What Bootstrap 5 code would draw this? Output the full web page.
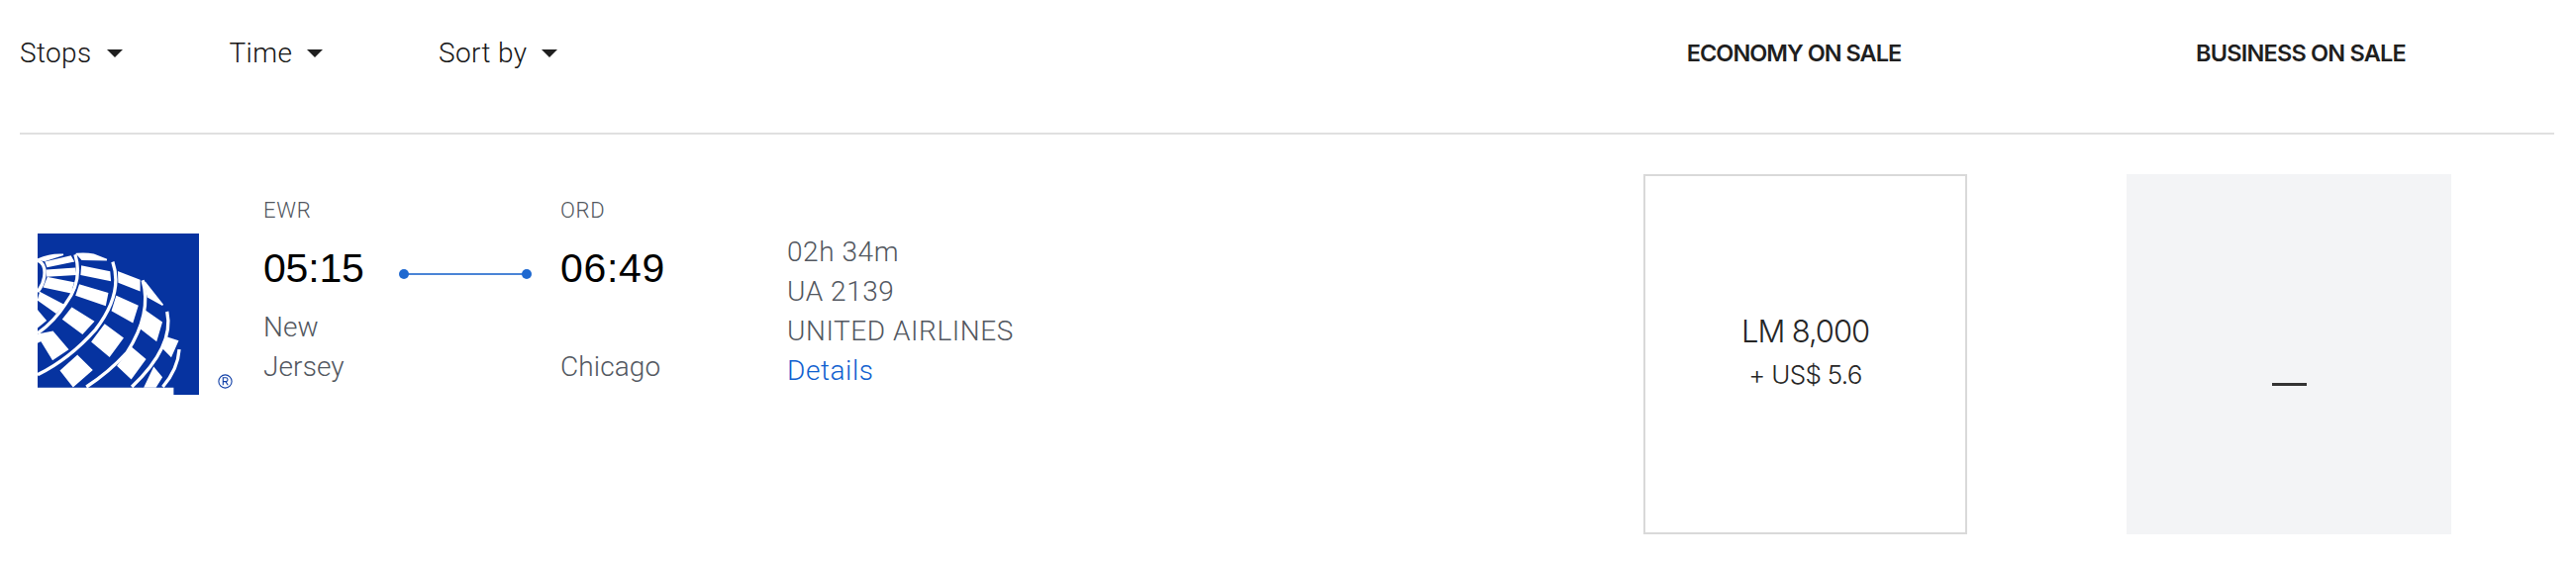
<!DOCTYPE html>
<html lang="en">
<head>
<meta charset="utf-8">
<title>Flights</title>
<link href="https://cdn.jsdelivr.net/npm/bootstrap@5.3.0/dist/css/bootstrap.min.css" rel="stylesheet">
<style>
body{background:#fff;font-family:"Roboto","Liberation Sans",sans-serif;font-weight:300;color:#262626;overflow:hidden}
.page-wrap{margin:0 22px 0 20px}
.filter-bar{height:136px;border-bottom:2px solid #e0e0e0;padding-bottom:26px}
.filter-group{width:1620px}
.filter-btn{width:211.5px;font-size:28px;line-height:40px;color:#161616;letter-spacing:.35px}
.filter-btn.dropdown-toggle::after{margin-left:15px;vertical-align:.17em;border-top-width:8px;border-left-width:8px;border-right-width:8px;color:#1f1f1f}
.head-cell{font-family:"Inter","Liberation Sans",sans-serif;font-weight:600;font-size:23.5px;letter-spacing:-1px;color:#1f1f1f;text-align:center}
.head-econ{width:344px}
.head-bus{width:352px;margin-left:164px;letter-spacing:-.8px}
.flight-row{padding-top:40px}
.logo-col{width:246px;padding:60px 0 0 18px}
.logo-mark{width:163px;height:163px;display:block}
.reg-mark{width:15px;height:15px;display:block;margin:-21px 0 0 182px}
.city-col{width:300px}
.city-col-last{width:229px}
.code-txt{font-size:22px;line-height:32px;color:#525760;padding-top:21px;letter-spacing:.7px}
.time-row{margin-top:18px;height:48px}
.time-txt{font-family:"Liberation Sans",sans-serif;font-weight:400;font-size:41px;line-height:48px;color:#000;letter-spacing:-.2px}
.time-arrive{letter-spacing:.7px}
.conn-line{width:132px;height:2px;background:#4a84d6;margin:12px 0 0 36px;position:relative}
.conn-line::before,.conn-line::after{content:"";position:absolute;top:-4px;width:10px;height:10px;border-radius:50%;background:#1f69d0}
.conn-line::before{left:-1px}
.conn-line::after{right:-1px}
.city-txt{font-size:28px;line-height:40px;color:#525760;height:80px;margin-top:16px;width:96px;letter-spacing:.1px}
.meta-col{width:865px;padding-top:59px;font-size:28px;line-height:40px;color:#525760;letter-spacing:.55px}
.meta-col a{color:#0f5fcf;text-decoration:none}
.fare-box{width:327px;height:364px;flex:none}
.fare-econ{border:2px solid #d9d9d9}
.fare-bus{background:#f3f4f6;margin-left:161px;width:328px}
.fare-main{font-family:"Inter","Liberation Sans",sans-serif;font-weight:300;font-size:31px;line-height:44px;letter-spacing:-1.1px;color:#262626;margin-top:-3px}
.fare-sub{font-family:"Inter","Liberation Sans",sans-serif;font-weight:300;font-size:26px;line-height:44px;letter-spacing:-.7px;color:#262626}
.dash-txt{width:35px;height:3px;background:#333;margin-top:60px}
</style>
</head>
<body>
<div class="page-wrap">
  <div class="filter-bar d-flex align-items-center">
    <div class="filter-group d-flex">
      <div class="filter-btn dropdown-toggle">Stops</div>
      <div class="filter-btn dropdown-toggle">Time</div>
      <div class="filter-btn dropdown-toggle">Sort by</div>
    </div>
    <div class="head-cell head-econ">ECONOMY ON SALE</div>
    <div class="head-cell head-bus">BUSINESS ON SALE</div>
  </div>
  <div class="flight-row d-flex">
    <div class="logo-col flex-shrink-0">
      <svg class="logo-mark" viewBox="114 108 490 490" xmlns="http://www.w3.org/2000/svg" aria-label="United Airlines logo">
        <path fill="#0633a0" d="M114 108H604V598H527V576H114Z"/>
        <g fill="none" stroke="#fff" stroke-width="10">
          <path d="M114 190Q140 200 134 240Q130 265 114 285"/>
          <path d="M228 172Q252 250 200 320Q165 375 114 411"/>
          <path d="M342 194Q375 290 290 400Q210 490 114 537"/>
          <path d="M433 250Q462 350 385 470Q330 530 262 574"/>
          <path d="M507 345Q530 450 400 574"/>
          <path d="M544 460Q540 520 494 574"/>
        </g>
        <g fill="#fff" stroke="#fff" stroke-width="5" stroke-linejoin="miter">
          <path d="M116 186Q150 170 192 172L135 190Z"/>
          <path d="M139 195L214 178L222 192L144 208Z"/>
          <path d="M142 220L227 214L229 232L144 237Z"/>
          <path d="M145 243L222 258L214 287L134 270Z"/>
          <path d="M122 288L192 325L170 348L116 310Z"/>
          <path d="M116 346L138 372L116 390Z"/>
          <path d="M234 170Q262 168 284 172L324 188L249 187Z"/>
          <path d="M249 208L332 225L334 250L247 232Z"/>
          <path d="M242 265L326 290L319 325L232 295Z"/>
          <path d="M218 335L283 375L250 411L192 368Z"/>
          <path d="M160 407L205 460L160 490L125 433L116 437V415Z"/>
          <path d="M360 226L423 250V280L361 256Z"/>
          <path d="M354 300L417 328L402 376L341 342Z"/>
          <path d="M318 386L372 426L332 480L280 437Z"/>
          <path d="M235 480L278 523L222 572L185 525Z"/>
          <path d="M439 255L494 325L449 300Z"/>
          <path d="M443 345L490 378L474 432L427 396Z"/>
          <path d="M400 456L440 490L398 548L358 510Z"/>
          <path d="M509 425L539 435L519 480L494 455Z"/>
          <path d="M467 517L490 545L472 574H440Z"/>
        </g>
      </svg>
      <svg class="reg-mark" viewBox="0 0 15 15" xmlns="http://www.w3.org/2000/svg" aria-hidden="true">
        <circle cx="7.5" cy="7.5" r="6.6" fill="none" stroke="#0f3ea6" stroke-width="1.1"/>
        <path fill="none" stroke="#0f3ea6" stroke-width="1.1" d="M5.3 11.3V3.8H8.2Q10 3.8 10 5.7T8.2 7.6H5.3M8 7.6L10.2 11.3"/>
      </svg>
    </div>
    <div class="city-col flex-shrink-0">
      <div class="code-txt">EWR</div>
      <div class="time-row d-flex align-items-center">
        <div class="time-txt">05:15</div>
        <div class="conn-line"></div>
      </div>
      <div class="city-txt">New Jersey</div>
    </div>
    <div class="city-col-last flex-shrink-0">
      <div class="code-txt">ORD</div>
      <div class="time-row d-flex align-items-center">
        <div class="time-txt time-arrive">06:49</div>
      </div>
      <div class="city-txt d-flex align-items-end">Chicago</div>
    </div>
    <div class="meta-col flex-shrink-0">
      <div>02h 34m</div>
      <div>UA 2139</div>
      <div>UNITED AIRLINES</div>
      <a href="#">Details</a>
    </div>
    <div class="fare-box fare-econ d-flex flex-column align-items-center justify-content-center">
      <div class="fare-main">LM 8,000</div>
      <div class="fare-sub">+ US$ 5.6</div>
    </div>
    <div class="fare-box fare-bus d-flex align-items-center justify-content-center">
      <div class="dash-txt"></div>
    </div>
  </div>
</div>
</body>
</html>
